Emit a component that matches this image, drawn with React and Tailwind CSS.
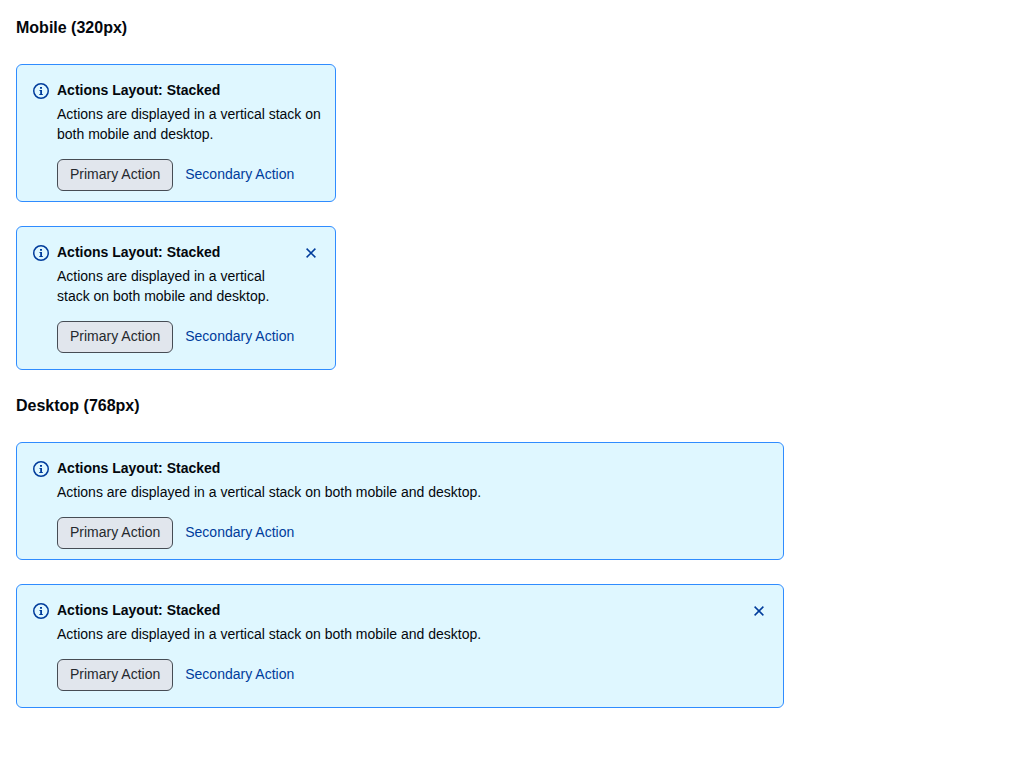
function InfoIcon() {
  return (
    <svg className="mt-[3px] size-4 shrink-0 text-[#003c9c]" viewBox="0 0 16 16" fill="none" aria-hidden="true">
      <circle cx="8" cy="8" r="7.25" stroke="currentColor" strokeWidth="1.5" />
      <path fill="currentColor" d="M7 4h2v1.75H7zM6.5 7H9v3.9h.8V12H6.3v-1.1h.9V8.1h-.7z" />
    </svg>
  );
}

function CloseIcon() {
  return (
    <svg className="size-4" viewBox="0 0 16 16" fill="none" aria-hidden="true">
      <path d="M3.6 3.6l8.8 8.8M12.4 3.6l-8.8 8.8" stroke="currentColor" strokeWidth="1.5" />
    </svg>
  );
}

function Banner({ dismissible = false }) {
  return (
    <section
      className={`flex items-start rounded-md border border-[#2f8cff] bg-[#dff7ff] pl-4 pr-2 text-sm leading-5 text-[#03070d] ${
        dismissible ? "pb-4" : "pb-2.5"
      }`}
    >
      <div className="flex min-w-0 grow gap-2 pt-[15px]">
        <InfoIcon />
        <div className="min-w-0 grow">
          <h3 className="font-bold">Actions Layout: Stacked</h3>
          <p className="mt-1">Actions are displayed in a vertical stack on both mobile and desktop.</p>
          <div className={`mt-[15px] flex gap-3 ${dismissible ? "-mr-8" : ""}`}>
            <button
              type="button"
              className="h-8 shrink-0 rounded-md border border-[#464c54] bg-[#e1e6ed] px-3 pb-0.5 text-[#25292e]"
            >
              Primary Action
            </button>
            <button type="button" className="h-8 shrink-0 pb-0.5 text-[#003c9c]">
              Secondary Action
            </button>
          </div>
        </div>
      </div>
      {dismissible && (
        <button
          type="button"
          aria-label="Dismiss"
          className="mt-2.5 flex size-8 shrink-0 items-center justify-center text-[#003c9c]"
        >
          <CloseIcon />
        </button>
      )}
    </section>
  );
}

export default function App() {
  return (
    <main className="flex flex-col gap-6 p-4 font-['Liberation_Sans',Arial,sans-serif] text-[#03070d]">
      <h2 className="text-base font-bold leading-6">Mobile (320px)</h2>
      <div className="flex w-full max-w-80 flex-col gap-6">
        <Banner />
        <Banner dismissible />
      </div>
      <h2 className="text-base font-bold leading-6">Desktop (768px)</h2>
      <div className="flex w-full max-w-3xl flex-col gap-6">
        <Banner />
        <Banner dismissible />
      </div>
    </main>
  );
}
